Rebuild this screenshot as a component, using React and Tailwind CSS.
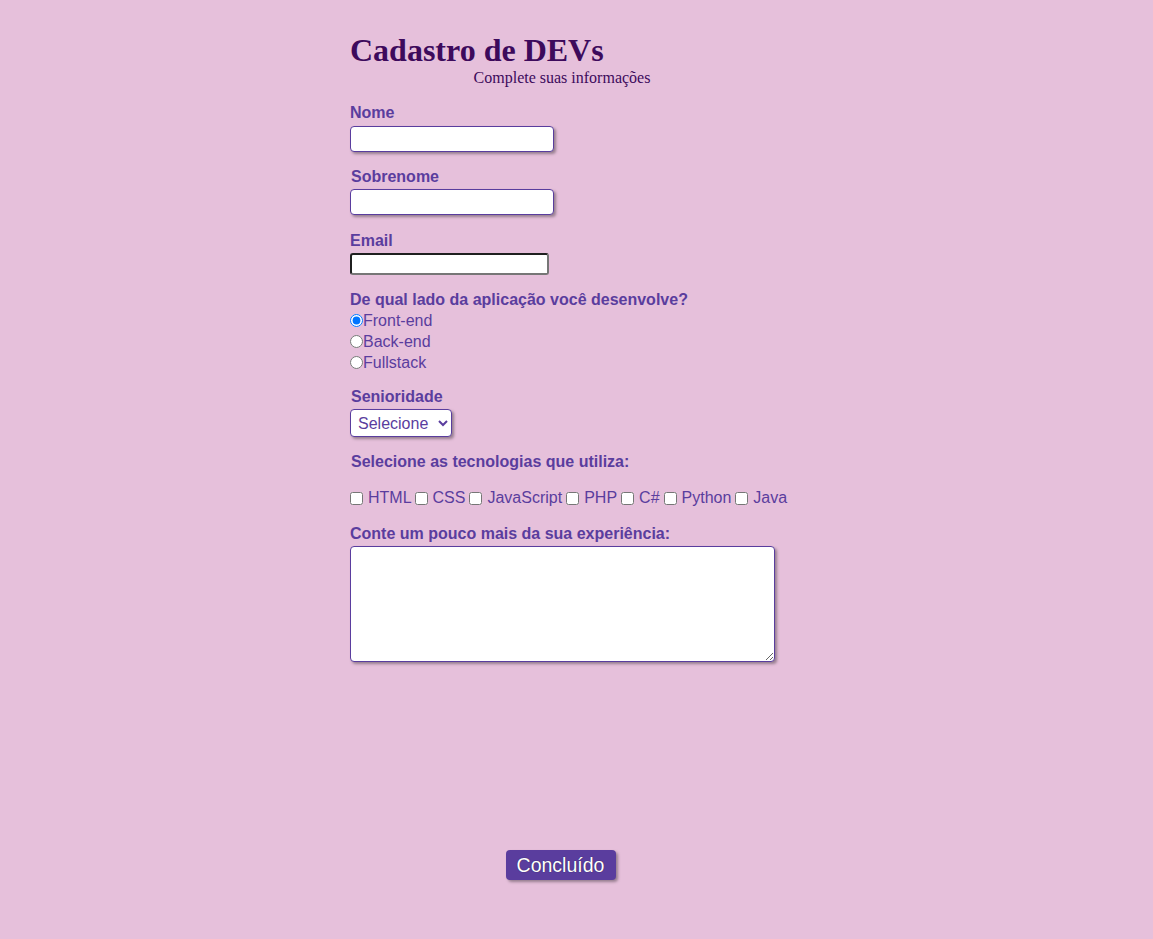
import React from "react";

const labelCls = "block font-bold text-[16px] leading-[18px] text-[#5a3d9e]";
const inputCls =
  "block w-[204px] h-[26px] bg-white border border-[#5a3d9e] rounded-[4px] shadow-[2px_2px_3px_rgba(0,0,0,0.35)] outline-none";

export default function App() {
  const techs = ["HTML", "CSS", "JavaScript", "PHP", "C#", "Python", "Java"];
  return (
    <div
      className="min-h-[939px] w-full bg-[#e6c0db] text-[#5a3d9e]"
      style={{ fontFamily: '"Liberation Sans", Arial, sans-serif' }}
    >
      <div className="pl-[350px] pt-[32px]">
        <div className="w-[425px] flex flex-col">
          <h1
            className="text-[32px] leading-[36px] font-bold text-[#3d0a5c]"
            style={{ fontFamily: '"Liberation Serif", "Times New Roman", serif' }}
          >
            Cadastro de DEVs
          </h1>
          <p
            className="text-center text-[16px] leading-[18px] text-[#3d0a5c] mt-[1px] -ml-[1px]"
            style={{ fontFamily: '"Liberation Serif", "Times New Roman", serif' }}
          >
            Complete suas informações
          </p>

          <label className={labelCls + " mt-[17px]"}>Nome</label>
          <input type="text" className={inputCls + " mt-[4px]"} />

          <label className={labelCls + " mt-[16px] ml-[1px]"}>Sobrenome</label>
          <input type="text" className={inputCls + " mt-[3px]"} />

          <label className={labelCls + " mt-[17px]"}>Email</label>
          <input
            type="email"
            className="block w-[199px] h-[22px] mt-[3px] bg-white border-2 border-t-[#1f1f1f] border-l-[#1f1f1f] border-b-[#767676] border-r-[#767676] rounded-[3px] outline-none"
          />

          <label className={labelCls + " mt-[16px]"}>
            De qual lado da aplicação você desenvolve?
          </label>
          <div className="mt-[1px] flex flex-col text-[16px]">
            {["Front-end", "Back-end", "Fullstack"].map((t, i) => (
              <label key={t} className="flex items-center h-[21px]">
                <input
                  type="radio"
                  name="lado"
                  defaultChecked={i === 0}
                  className="m-0 w-[13px] h-[13px]"
                />
                <span className="leading-[18px]">{t}</span>
              </label>
            ))}
          </div>

          <label className={labelCls + " mt-[15px] ml-[1px]"}>Senioridade</label>
          <select className="mt-[3px] w-[102px] h-[28px] bg-white border border-[#5a3d9e] rounded-[4px] text-[16px] text-[#5a3d9e] pl-[3px] shadow-[2px_2px_3px_rgba(0,0,0,0.35)] outline-none">
            <option>Selecione</option>
            <option>Júnior</option>
            <option>Pleno</option>
            <option>Sênior</option>
          </select>

          <label className={labelCls + " mt-[16px] ml-[1px]"}>
            Selecione as tecnologias que utiliza:
          </label>
          <div className="mt-[18px] flex items-center text-[16px] leading-[18px] whitespace-nowrap">
            {techs.map((t, i) => (
              <label key={t} className="flex items-center">
                <input type="checkbox" className="m-0 mr-[5px] w-[13px] h-[13px]" />
                <span className={i === 0 ? "mr-[3px]" : "mr-[4px]"}>{t}</span>
              </label>
            ))}
          </div>

          <label className={labelCls + " mt-[18px]"}>
            Conte um pouco mais da sua experiência:
          </label>
          <textarea className="block mt-[3px] w-[425px] h-[116px] bg-white border border-[#5a3d9e] rounded-[4px] shadow-[2px_2px_3px_rgba(0,0,0,0.35)] outline-none" />

          <div className="flex justify-center mt-[188px]">
            <button
              className="w-[110px] h-[30px] bg-[#5a3d9e] text-white text-[19.5px] leading-[24px] rounded-[4px] shadow-[2px_2px_3px_rgba(0,0,0,0.35)] -ml-[4px]"
              style={{ textShadow: "0 0 1px rgba(0,0,0,0.6)" }}
            >
              Concluído
            </button>
          </div>
        </div>
      </div>
    </div>
  );
}
